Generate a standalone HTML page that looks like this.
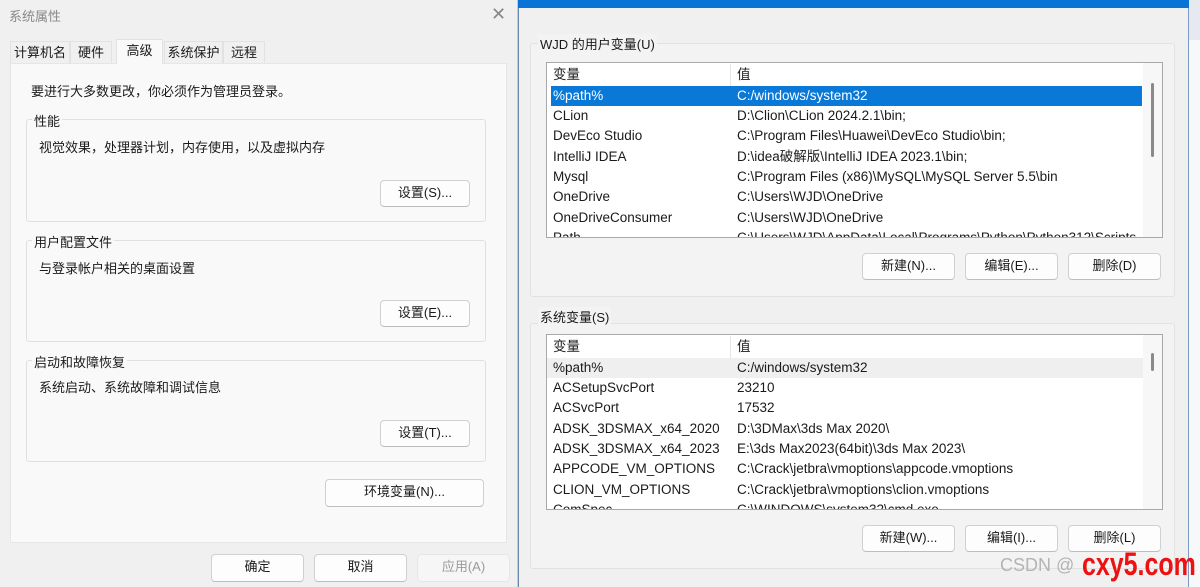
<!DOCTYPE html>
<html><head><meta charset="utf-8"><style>
*{box-sizing:border-box;margin:0;padding:0}
body{width:1200px;height:587px;overflow:hidden;background:#eef0f3;font-family:"Liberation Sans","Noto Sans CJK SC",sans-serif;font-size:13px;color:#1a1a1a;position:relative}
.a{position:absolute}
.btn{position:absolute;background:#fdfdfd;border:1px solid #d0d0d0;border-bottom-color:#bdbdbd;border-radius:4px;text-align:center;font-size:13px;line-height:24px;color:#1a1a1a}
.grp{position:absolute;border:1px solid #e0e0e0;border-radius:3px}
.row{position:absolute;left:0;width:596px;height:20px;line-height:20px;font-size:13.5px;white-space:nowrap;overflow:hidden}
.row span{position:absolute;left:6px}
.row span+span{left:190px}
</style></head><body>
<!-- left dialog -->
<div class="a" style="left:0;top:0;width:518px;height:587px;background:#f0f0f0;border-right:1px solid #c8c8c8"></div>
<div class="a" style="left:9px;top:6px;color:#8a8a8a;font-size:13px">系统属性</div>
<div class="a" style="left:491px;top:4px;color:#888;font-size:18px;font-weight:300">✕</div>
<div class="a" style="left:10px;top:63px;width:497px;height:480px;background:#f9f9f9;border:1px solid #e6e6e6"></div>
<div class="a" style="left:10px;top:41px;width:60px;height:22px;background:#f0f0f0;border:1px solid #e2e2e2;border-bottom:none;line-height:22px;text-align:center">计算机名</div>
<div class="a" style="left:70px;top:41px;width:42px;height:22px;background:#f0f0f0;border:1px solid #e2e2e2;border-bottom:none;line-height:22px;text-align:center">硬件</div>
<div class="a" style="left:116px;top:39px;width:47px;height:25px;background:#f9f9f9;border:1px solid #e2e2e2;border-bottom:none;line-height:22px;text-align:center">高级</div>
<div class="a" style="left:164px;top:41px;width:59px;height:22px;background:#f0f0f0;border:1px solid #e2e2e2;border-bottom:none;line-height:22px;text-align:center">系统保护</div>
<div class="a" style="left:223px;top:41px;width:42px;height:22px;background:#f0f0f0;border:1px solid #e2e2e2;border-bottom:none;line-height:22px;text-align:center">远程</div>
<div class="a" style="left:31px;top:81px">要进行大多数更改，你必须作为管理员登录。</div>

<div class="grp" style="left:26px;top:119px;width:460px;height:103px;background:#f9f9f9"></div>
<div class="a" style="left:32px;top:111px;background:#f9f9f9;padding:0 2px">性能</div>
<div class="a" style="left:39px;top:137px">视觉效果，处理器计划，内存使用，以及虚拟内存</div>
<div class="btn" style="left:380px;top:180px;width:90px;height:27px">设置(S)...</div>

<div class="grp" style="left:26px;top:240px;width:460px;height:102px;background:#f9f9f9"></div>
<div class="a" style="left:32px;top:232px;background:#f9f9f9;padding:0 2px">用户配置文件</div>
<div class="a" style="left:39px;top:258px">与登录帐户相关的桌面设置</div>
<div class="btn" style="left:380px;top:300px;width:90px;height:27px">设置(E)...</div>

<div class="grp" style="left:26px;top:360px;width:460px;height:102px;background:#f9f9f9"></div>
<div class="a" style="left:32px;top:352px;background:#f9f9f9;padding:0 2px">启动和故障恢复</div>
<div class="a" style="left:39px;top:377px">系统启动、系统故障和调试信息</div>
<div class="btn" style="left:380px;top:420px;width:90px;height:27px">设置(T)...</div>

<div class="btn" style="left:325px;top:479px;width:159px;height:28px">环境变量(N)...</div>

<div class="btn" style="left:211px;top:554px;width:93px;height:28px">确定</div>
<div class="btn" style="left:314px;top:554px;width:93px;height:28px">取消</div>
<div class="btn" style="left:417px;top:554px;width:93px;height:28px;background:#f6f6f6;border-color:#e6e6e6;color:#9a9a9a">应用(A)</div>

<!-- right dialog -->
<div class="a" style="left:518px;top:0;width:671px;height:587px;background:#f0f0f0;border-left:1px solid #6a8ab0;border-right:1px solid #7a9cc4"></div>
<div class="a" style="left:518px;top:0;width:671px;height:8px;background:#0a74d6"></div>
<div class="a" style="left:1189px;top:0;width:11px;height:587px;background:#f7f8fa"></div>
<div class="a" style="left:1189px;top:0;width:11px;height:40px;background:#e6eaf0"></div>

<div class="grp" style="left:530px;top:43px;width:645px;height:254px;background:#f3f3f3;border-color:#e2e2e2"></div>
<div class="a" style="left:538px;top:34px;background:#f3f3f3;padding:0 2px">WJD 的用户变量(U)</div>
<div class="a" style="left:546px;top:62px;width:617px;height:176px;background:#fff;border:1px solid #a8a8a8;overflow:hidden">
  <div class="row" style="top:1px;height:22px;line-height:22px"><span>变量</span><span style="left:190px;border-left:1px solid #e5e5e5;padding-left:6px;margin-left:-7px">值</span></div>
  <div class="row" style="top:23px;background:#0a78d7;color:#fff;left:4px;width:591px"><span style="left:2px">%path%</span><span style="left:186px">C:/windows/system32</span></div>
  <div class="row" style="top:43px"><span>CLion</span><span>D:\Clion\CLion 2024.2.1\bin;</span></div>
  <div class="row" style="top:63px"><span>DevEco Studio</span><span>C:\Program Files\Huawei\DevEco Studio\bin;</span></div>
  <div class="row" style="top:84px"><span>IntelliJ IDEA</span><span>D:\idea破解版\IntelliJ IDEA 2023.1\bin;</span></div>
  <div class="row" style="top:104px"><span>Mysql</span><span>C:\Program Files (x86)\MySQL\MySQL Server 5.5\bin</span></div>
  <div class="row" style="top:124px"><span>OneDrive</span><span>C:\Users\WJD\OneDrive</span></div>
  <div class="row" style="top:145px"><span>OneDriveConsumer</span><span>C:\Users\WJD\OneDrive</span></div>
  <div class="row" style="top:165px"><span>Path</span><span>C:\Users\WJD\AppData\Local\Programs\Python\Python312\Scripts</span></div>
  <div class="a" style="left:596px;top:0;width:20px;height:176px;background:#f7f7f7"></div>
  <div class="a" style="left:604px;top:20px;width:3px;height:74px;background:#8a8a8a;border-radius:2px"></div>
</div>
<div class="btn" style="left:862px;top:253px;width:93px;height:27px">新建(N)...</div>
<div class="btn" style="left:965px;top:253px;width:93px;height:27px">编辑(E)...</div>
<div class="btn" style="left:1068px;top:253px;width:93px;height:27px">删除(D)</div>

<div class="grp" style="left:530px;top:323px;width:645px;height:246px;background:#f3f3f3;border-color:#e2e2e2"></div>
<div class="a" style="left:538px;top:307px;background:#f3f3f3;padding:0 2px">系统变量(S)</div>
<div class="a" style="left:546px;top:334px;width:617px;height:176px;background:#fff;border:1px solid #a8a8a8;overflow:hidden">
  <div class="row" style="top:1px;height:22px;line-height:22px"><span>变量</span><span style="left:190px;border-left:1px solid #e5e5e5;padding-left:6px;margin-left:-7px">值</span></div>
  <div class="row" style="top:23px;background:#efefef"><span>%path%</span><span>C:/windows/system32</span></div>
  <div class="row" style="top:43px"><span>ACSetupSvcPort</span><span>23210</span></div>
  <div class="row" style="top:63px"><span>ACSvcPort</span><span>17532</span></div>
  <div class="row" style="top:84px"><span>ADSK_3DSMAX_x64_2020</span><span>D:\3DMax\3ds Max 2020\</span></div>
  <div class="row" style="top:104px"><span>ADSK_3DSMAX_x64_2023</span><span>E:\3ds Max2023(64bit)\3ds Max 2023\</span></div>
  <div class="row" style="top:124px"><span>APPCODE_VM_OPTIONS</span><span>C:\Crack\jetbra\vmoptions\appcode.vmoptions</span></div>
  <div class="row" style="top:145px"><span>CLION_VM_OPTIONS</span><span>C:\Crack\jetbra\vmoptions\clion.vmoptions</span></div>
  <div class="row" style="top:165px"><span>ComSpec</span><span>C:\WINDOWS\system32\cmd.exe</span></div>
  <div class="a" style="left:596px;top:0;width:20px;height:176px;background:#f7f7f7"></div>
  <div class="a" style="left:604px;top:18px;width:3px;height:18px;background:#8a8a8a;border-radius:2px"></div>
</div>
<div class="btn" style="left:862px;top:525px;width:93px;height:27px">新建(W)...</div>
<div class="btn" style="left:965px;top:525px;width:93px;height:27px">编辑(I)...</div>
<div class="btn" style="left:1068px;top:525px;width:93px;height:27px">删除(L)</div>

<div class="a" style="left:1000px;top:555px;font-size:18px;color:#b4b4b4">CSDN @</div>
<div class="a" style="left:1082px;top:546px;font-size:32px;font-weight:bold;color:#ee1111;transform:scaleX(0.78);transform-origin:0 0;font-family:'Liberation Sans',sans-serif;white-space:nowrap">cxy5.com</div>
</body></html>
